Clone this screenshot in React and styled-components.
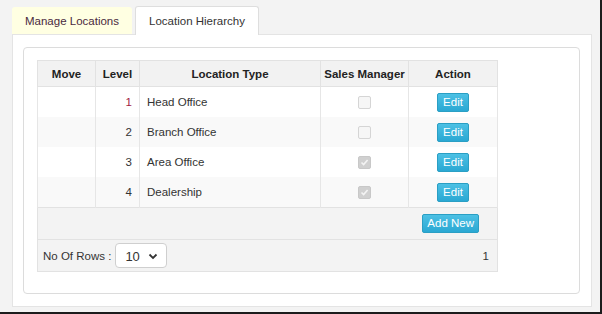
import styled, { createGlobalStyle } from "styled-components";

const Global = createGlobalStyle`
  html, body {
    margin: 0;
    padding: 0;
    background: #f3f3f3;
    font-family: "Liberation Sans", Arial, sans-serif;
    font-size: 11.5px;
    color: #333;
  }
`;

const Page = styled.div`
  width: 602px;
  height: 314px;
  box-sizing: border-box;
  padding: 6px 0 0 12px;
  border-right: 2px solid #1c1c1c;
  border-bottom: 2px solid #1c1c1c;
  overflow: hidden;
`;

const Tabs = styled.div`
  display: flex;
  align-items: flex-end;
  gap: 3px;
  height: 28px;
`;

const Tab = styled.div`
  box-sizing: border-box;
  height: ${(p) => (p.active ? "29px" : "27px")};
  width: ${(p) => p.w}px;
  display: flex;
  align-items: center;
  justify-content: center;
  font-size: 11.5px;
  color: ${(p) => (p.active ? "#333" : "#4a2a40")};
  background: ${(p) => (p.active ? "#fff" : "#ffffe2")};
  border: 1px solid ${(p) => (p.active ? "#dedede" : "transparent")};
  border-bottom: none;
  border-radius: 3px 3px 0 0;
  margin-bottom: ${(p) => (p.active ? "-1px" : "0")};
  position: relative;
  z-index: 1;
  padding-bottom: 1px;
`;

const Outer = styled.div`
  box-sizing: border-box;
  width: 580px;
  height: 273px;
  background: #fff;
  border: 1px solid #e4e4e4;
  padding: 12px 11px 12px 10px;
`;

const Inner = styled.div`
  box-sizing: border-box;
  height: 100%;
  border: 1px solid #dcdcdc;
  border-radius: 4px;
  padding: 12px 13px;
`;

const Table = styled.table`
  border-collapse: collapse;
  width: 460px;
  table-layout: fixed;
`;

const Th = styled.th`
  height: 25px;
  background: #f2f2f2;
  border: 1px solid #e2e2e2;
  font-weight: bold;
  color: #222;
  text-align: center;
  padding: 0;
`;

const Row = styled.tr`
  background: ${(p) => (p.odd ? "#f9f9f9" : "#fff")};
`;

const Td = styled.td`
  height: 30px;
  border-left: 1px solid #e6e6e6;
  border-right: 1px solid #e6e6e6;
  padding: 0 7px;
  text-align: ${(p) => p.align || "left"};
  color: ${(p) => p.color || "#333"};
  vertical-align: middle;
`;

const FootCell = styled.td`
  height: 31px;
  background: #f3f3f3;
  border: 1px solid #e2e2e2;
  padding: 0 18px 0 5px;
  text-align: right;
`;

const PagerCell = styled.td`
  height: 31px;
  background: #f3f3f3;
  border: 1px solid #e2e2e2;
  padding: 0 8px 0 5px;
`;

const Pager = styled.div`
  display: flex;
  align-items: center;
  justify-content: space-between;
`;

const PagerLeft = styled.div`
  display: flex;
  align-items: center;
  gap: 4px;
`;

const Btn = styled.button`
  font-family: "Liberation Sans", Arial, sans-serif;
  font-size: 11.5px;
  color: #fff;
  height: 19px;
  padding: 0 ${(p) => (p.wide ? "4px" : "5px")};
  border: 1px solid #2a9fc4;
  border-radius: 2px;
  background: linear-gradient(#4cc0e4, #2aa8d3);
  line-height: 17px;
  cursor: pointer;
`;

const Check = styled.span`
  display: inline-block;
  box-sizing: border-box;
  width: 13px;
  height: 13px;
  border: 1px solid ${(p) => (p.checked ? "#c8c8c8" : "#d5d5d5")};
  background: ${(p) => (p.checked ? "#d0d0d0" : "#f6f6f6")};
  border-radius: 2px;
  vertical-align: middle;
  position: relative;

  svg {
    position: absolute;
    left: 1px;
    top: 1px;
  }
`;

const Select = styled.div`
  box-sizing: border-box;
  width: 52px;
  height: 25px;
  border: 1px solid #cfcfcf;
  border-radius: 4px;
  background: #fff;
  display: flex;
  align-items: center;
  justify-content: space-between;
  padding: 2px 8px 0 9px;
  font-size: 13px;
  color: #333;
`;

const rows = [
  { level: 1, type: "Head Office", sm: false },
  { level: 2, type: "Branch Office", sm: false },
  { level: 3, type: "Area Office", sm: true },
  { level: 4, type: "Dealership", sm: true },
];

export default function App() {
  return (
    <>
      <Global />
      <Page>
        <Tabs>
          <Tab w={120}>Manage Locations</Tab>
          <Tab w={124} active>
            Location Hierarchy
          </Tab>
        </Tabs>
        <Outer>
          <Inner>
            <Table>
              <colgroup>
                <col style={{ width: 58 }} />
                <col style={{ width: 44 }} />
                <col style={{ width: 181 }} />
                <col style={{ width: 88 }} />
                <col style={{ width: 89 }} />
              </colgroup>
              <thead>
                <tr>
                  <Th>Move</Th>
                  <Th>Level</Th>
                  <Th>Location Type</Th>
                  <Th>Sales Manager</Th>
                  <Th>Action</Th>
                </tr>
              </thead>
              <tbody>
                {rows.map((r, i) => (
                  <Row key={r.level} odd={i % 2 === 1}>
                    <Td />
                    <Td align="right" color={i === 0 ? "#a3203f" : "#333"}>
                      {r.level}
                    </Td>
                    <Td>{r.type}</Td>
                    <Td align="center">
                      <Check checked={r.sm}>
                        {r.sm && (
                          <svg width="9" height="9" viewBox="0 0 9 9">
                            <path d="M1.5 4.5 L3.6 6.6 L7.6 2" fill="none" stroke="#f4f4f4" strokeWidth="1.6" />
                          </svg>
                        )}
                      </Check>
                    </Td>
                    <Td align="center">
                      <Btn>Edit</Btn>
                    </Td>
                  </Row>
                ))}
                <tr>
                  <FootCell colSpan={5}>
                    <Btn wide>Add New</Btn>
                  </FootCell>
                </tr>
                <tr>
                  <PagerCell colSpan={5}>
                    <Pager>
                      <PagerLeft>
                        <span>No Of Rows :</span>
                        <Select>
                          <span>10</span>
                          <svg width="10" height="7" viewBox="0 0 10 7">
                            <path d="M1.5 1.5 L5 5 L8.5 1.5" fill="none" stroke="#333" strokeWidth="1.8" />
                          </svg>
                        </Select>
                      </PagerLeft>
                      <span>1</span>
                    </Pager>
                  </PagerCell>
                </tr>
              </tbody>
            </Table>
          </Inner>
        </Outer>
      </Page>
    </>
  );
}
